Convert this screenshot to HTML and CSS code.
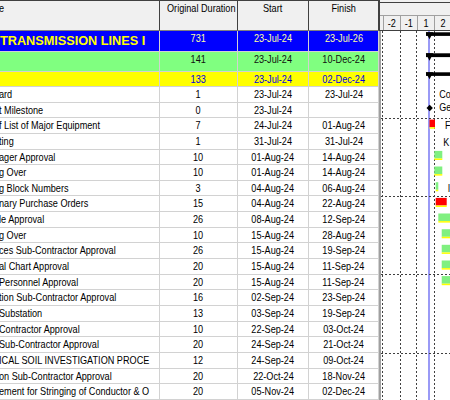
FILE: index.html
```html
<!DOCTYPE html>
<html>
<head>
<meta charset="utf-8">
<link rel="stylesheet" href="styles.css">
</head>
<body>
<div class="view">
  <div class="table">
    <div class="row head">
      <div class="c name"><span>e</span></div>
      <div class="c"><span>Original Duration</span></div>
      <div class="c"><span>Start</span></div>
      <div class="c"><span>Finish</span></div>
    </div>
    <div class="row wbs1">
      <div class="c name title">TRANSMISSION LINES I</div>
      <div class="c"><span>731</span></div>
      <div class="c"><span>23-Jul-24</span></div>
      <div class="c"><span>23-Jul-26</span></div>
    </div>
    <div class="row wbs2">
      <div class="c name"></div>
      <div class="c"><span>141</span></div>
      <div class="c"><span>23-Jul-24</span></div>
      <div class="c"><span>10-Dec-24</span></div>
    </div>
    <div class="row wbs3">
      <div class="c name"></div>
      <div class="c"><span>133</span></div>
      <div class="c"><span>23-Jul-24</span></div>
      <div class="c"><span>02-Dec-24</span></div>
    </div>
    <div class="row act"><div class="c name"><span>ard</span></div><div class="c"><span>1</span></div><div class="c"><span>23-Jul-24</span></div><div class="c"><span>23-Jul-24</span></div></div>
    <div class="row act"><div class="c name"><span>t Milestone</span></div><div class="c"><span>0</span></div><div class="c"><span>23-Jul-24</span></div><div class="c"></div></div>
    <div class="row act"><div class="c name"><span>f List of Major Equipment</span></div><div class="c"><span>7</span></div><div class="c"><span>24-Jul-24</span></div><div class="c"><span>01-Aug-24</span></div></div>
    <div class="row act"><div class="c name"><span>ting</span></div><div class="c"><span>1</span></div><div class="c"><span>31-Jul-24</span></div><div class="c"><span>31-Jul-24</span></div></div>
    <div class="row act"><div class="c name"><span>ager Approval</span></div><div class="c"><span>10</span></div><div class="c"><span>01-Aug-24</span></div><div class="c"><span>14-Aug-24</span></div></div>
    <div class="row act"><div class="c name"><span>g Over</span></div><div class="c"><span>10</span></div><div class="c"><span>01-Aug-24</span></div><div class="c"><span>14-Aug-24</span></div></div>
    <div class="row act"><div class="c name"><span>g Block Numbers</span></div><div class="c"><span>3</span></div><div class="c"><span>04-Aug-24</span></div><div class="c"><span>06-Aug-24</span></div></div>
    <div class="row act"><div class="c name"><span>nary Purchase Orders</span></div><div class="c"><span>15</span></div><div class="c"><span>04-Aug-24</span></div><div class="c"><span>22-Aug-24</span></div></div>
    <div class="row act"><div class="c name"><span>le Approval</span></div><div class="c"><span>26</span></div><div class="c"><span>08-Aug-24</span></div><div class="c"><span>12-Sep-24</span></div></div>
    <div class="row act"><div class="c name"><span>g Over</span></div><div class="c"><span>10</span></div><div class="c"><span>15-Aug-24</span></div><div class="c"><span>28-Aug-24</span></div></div>
    <div class="row act"><div class="c name"><span>ces Sub-Contractor Approval</span></div><div class="c"><span>26</span></div><div class="c"><span>15-Aug-24</span></div><div class="c"><span>19-Sep-24</span></div></div>
    <div class="row act"><div class="c name"><span>al Chart Approval</span></div><div class="c"><span>20</span></div><div class="c"><span>15-Aug-24</span></div><div class="c"><span>11-Sep-24</span></div></div>
    <div class="row act"><div class="c name"><span>Personnel Approval</span></div><div class="c"><span>20</span></div><div class="c"><span>15-Aug-24</span></div><div class="c"><span>11-Sep-24</span></div></div>
    <div class="row act"><div class="c name"><span>tion Sub-Contractor Approval</span></div><div class="c"><span>16</span></div><div class="c"><span>02-Sep-24</span></div><div class="c"><span>23-Sep-24</span></div></div>
    <div class="row act"><div class="c name"><span>Substation</span></div><div class="c"><span>13</span></div><div class="c"><span>03-Sep-24</span></div><div class="c"><span>19-Sep-24</span></div></div>
    <div class="row act"><div class="c name"><span>Contractor Approval</span></div><div class="c"><span>10</span></div><div class="c"><span>22-Sep-24</span></div><div class="c"><span>03-Oct-24</span></div></div>
    <div class="row act"><div class="c name"><span>Sub-Contractor Approval</span></div><div class="c"><span>20</span></div><div class="c"><span>24-Sep-24</span></div><div class="c"><span>21-Oct-24</span></div></div>
    <div class="row act"><div class="c name"><span>ICAL SOIL INVESTIGATION PROCE</span></div><div class="c"><span>12</span></div><div class="c"><span>24-Sep-24</span></div><div class="c"><span>09-Oct-24</span></div></div>
    <div class="row act"><div class="c name"><span>on Sub-Contractor Approval</span></div><div class="c"><span>20</span></div><div class="c"><span>22-Oct-24</span></div><div class="c"><span>18-Nov-24</span></div></div>
    <div class="row act"><div class="c name"><span>ement for Stringing of Conductor &amp; O</span></div><div class="c"><span>20</span></div><div class="c"><span>05-Nov-24</span></div><div class="c"><span>02-Dec-24</span></div></div>
  </div>
  <div class="gantt">
    <div class="ghead">
      <div class="gtop"></div>
      <div class="months">
        <div class="m lead"></div>
        <div class="m"><span>-2</span></div>
        <div class="m"><span>-1</span></div>
        <div class="m"><span>1</span></div>
        <div class="m"><span>2</span></div>
      </div>
    </div>
    <div class="gbody">
      <svg width="69" height="369" viewBox="0 0 69 369">
        <g transform="translate(-381 -31)">
          <rect class="ddate" x="428" y="31" width="2" height="369"/>
          <line class="grid" x1="382.5" y1="31" x2="382.5" y2="400"/>
          <line class="grid" x1="400.5" y1="31" x2="400.5" y2="400"/>
          <line class="grid" x1="416.5" y1="31" x2="416.5" y2="400"/>
          <line class="grid" x1="434.5" y1="31" x2="434.5" y2="400"/>
          <line class="grid" x1="381" y1="118.5" x2="450" y2="118.5"/>
          <line class="grid" x1="381" y1="196.5" x2="450" y2="196.5"/>
          <line class="grid" x1="381" y1="274.5" x2="450" y2="274.5"/>
          <line class="grid" x1="381" y1="353.5" x2="450" y2="353.5"/>

          <rect class="sum" x="426" y="32.3" width="30" height="3.6"/>
          <polygon class="sum" points="425.8,32.3 433.2,32.3 429.5,39.3"/>
          <rect class="sum" x="426" y="53.3" width="30" height="3.8"/>
          <polygon class="sum" points="425.8,53.3 433.2,53.3 429.5,60.7"/>
          <rect class="sum" x="426" y="72.3" width="30" height="3.6"/>
          <polygon class="sum" points="425.8,72.3 433.2,72.3 429.5,79.3"/>

          <polygon class="sum" points="429.7,104.8 432.9,108 429.7,111.2 426.5,108"/>

          <rect class="crit" x="429.5" y="119.6" width="5.5" height="7.6"/>
          <rect class="ul" x="429.5" y="127.2" width="5.5" height="1.5"/>

          <rect class="norm" x="434.3" y="150.9" width="8" height="7.6"/>
          <rect class="ul" x="434.3" y="158.5" width="8" height="1.5"/>
          <rect class="norm" x="434.3" y="166.5" width="8" height="7.6"/>
          <rect class="ul" x="434.3" y="174.1" width="8" height="1.5"/>
          <rect class="norm" x="435.7" y="182.2" width="2.6" height="7.6"/>
          <rect class="ul" x="435.7" y="189.8" width="2.6" height="1.5"/>
          <rect class="crit" x="435.7" y="197.9" width="11" height="7.6"/>
          <rect class="ul" x="435.7" y="205.5" width="11" height="1.5"/>
          <rect class="norm" x="438.3" y="213.5" width="14" height="7.6"/>
          <rect class="ul" x="438.3" y="221.1" width="14" height="1.5"/>
          <rect class="norm" x="441.7" y="229.2" width="10" height="7.6"/>
          <rect class="ul" x="441.7" y="236.8" width="10" height="1.5"/>
          <rect class="norm" x="441.7" y="244.8" width="10" height="7.6"/>
          <rect class="ul" x="441.7" y="252.4" width="10" height="1.5"/>
          <rect class="norm" x="441.7" y="260.5" width="10" height="7.6"/>
          <rect class="ul" x="441.7" y="268.1" width="10" height="1.5"/>
          <rect class="norm" x="441.7" y="276.1" width="10" height="7.6"/>
          <rect class="ul" x="441.7" y="283.7" width="10" height="1.5"/>

          <text class="lbl" transform="translate(439.3 98) scale(0.82 1)">Co</text>
          <text class="lbl" transform="translate(439.3 111.3) scale(0.82 1)">Ge</text>
          <text class="lbl" transform="translate(445 129) scale(0.82 1)">F</text>
          <text class="lbl" transform="translate(443.3 145.6) scale(0.82 1)">K</text>
          <text class="lbl" transform="translate(447.7 192) scale(0.82 1)">I</text>
        </g>
      </svg>
    </div>
  </div>
</div>
</body>
</html>
```

FILE: styles.css
```css
* {
  box-sizing: border-box;
  margin: 0;
  padding: 0;
}

html,
body {
  width: 450px;
  height: 400px;
  overflow: hidden;
  background: #ffffff;
}

body {
  font-family: "Liberation Sans", Arial, sans-serif;
  font-size: 11px;
  color: #000000;
}

.view {
  display: flex;
  width: 450px;
  height: 400px;
  overflow: hidden;
}

.table {
  width: 379px;
  flex: none;
}

.row {
  display: grid;
  grid-template-columns: 160px 78px 71px 70px;
}

.c {
  border-right: 1px solid #d2d2d2;
  border-bottom: 1px solid #d2d2d2;
  overflow: hidden;
  white-space: nowrap;
  line-height: 14px;
  text-align: center;
}

/* narrow (condensed) look of the schedule font */
.c > span,
.m > span {
  display: inline-block;
  transform: scaleX(0.83);
  transform-origin: 50% 50%;
}

.c.name {
  text-align: left;
}

.c.name > span {
  transform-origin: 0 50%;
  margin-left: -1px;
}

.head {
  height: 31px;
  background: #f0f0f0;
  border-top: 1px solid #404040;
}

.head .c {
  border-right-color: #404040;
  border-bottom-color: #808080;
}

.wbs1 {
  height: 21px;
  background: #0000ff;
  color: #ffffa0;
}

.wbs2 {
  height: 20px;
  background: #80ff80;
  color: #101010;
}

.wbs3 {
  height: 15px;
  background: #ffff00;
  color: #0000e0;
}

.act {
  height: 15.65px;
}

.c.title {
  font-weight: bold;
  font-size: 12.7px;
  line-height: 20px;
  color: #ffff00;
}

.gantt {
  flex: 1;
  min-width: 0;
  display: flex;
  flex-direction: column;
}

.ghead {
  height: 31px;
  flex: none;
  background: #f0f0f0;
  border-left: 1px solid #404040;
  display: flex;
  flex-direction: column;
}

.gtop {
  margin-top: 2px;
  height: 14px;
  border-top: 1px solid #404040;
  border-bottom: 1px solid #a0a0a0;
}

.months {
  display: flex;
  height: 15px;
  border-bottom: 1px solid #404040;
  overflow: hidden;
}

.m {
  flex: none;
  width: 17px;
  border-left: 1px solid #a0a0a0;
  text-align: center;
  line-height: 14px;
}

.m.lead {
  width: 3px;
  border-left: 0;
}

.gbody {
  flex: 1;
  border-left: 2px solid #a0a0a0;
  overflow: hidden;
}

.gbody svg {
  display: block;
}

.ddate {
  fill: #9a9af6;
}

.grid {
  stroke: #404040;
  stroke-width: 1;
  stroke-dasharray: 2 2;
}

.sum {
  fill: #000000;
}

.crit {
  fill: #ff0000;
}

.norm {
  fill: #80f080;
}

.ul {
  fill: #ffff00;
}

.lbl {
  font-family: "Liberation Sans", Arial, sans-serif;
  font-size: 11px;
  fill: #000000;
}
```
